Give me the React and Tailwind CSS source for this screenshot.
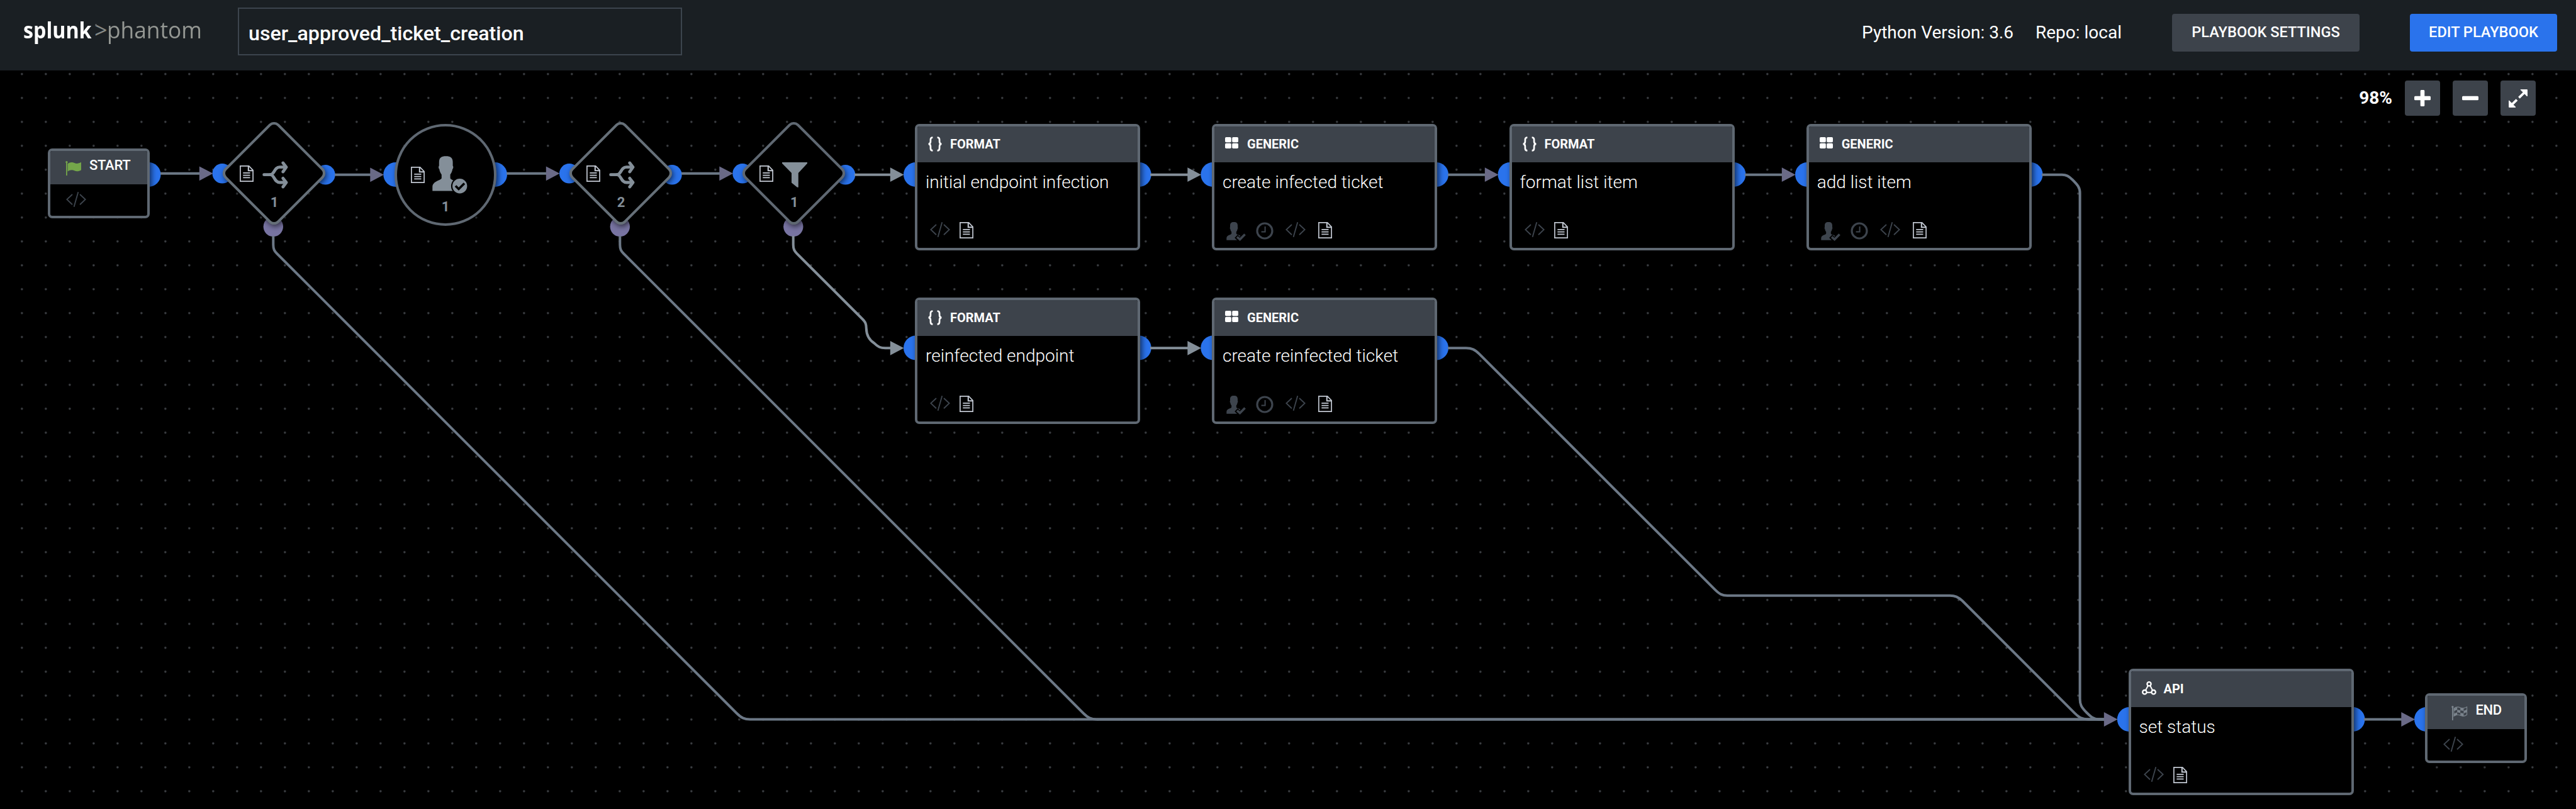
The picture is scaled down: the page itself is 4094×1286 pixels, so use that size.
const LINE = '#6c7886';
const LINE_LIGHT = '#848f99';
const ARROW = '#6a6a87';

/* ---------- icons ---------- */

const CodeIcon = () => (
  <svg width="32" height="24" viewBox="0 0 32 24" fill="none" stroke="#3d444d" strokeWidth="1.9" className="shrink-0">
    <path d="M10 4 L1.3 12 L10 20.3 M22 4 L30.7 12 L22 20.3 M19.3 0.3 L12.6 23.7" />
  </svg>
);

const DocIcon = () => (
  <svg width="22" height="26" viewBox="0 0 22 26" fill="none" stroke="#c3c9d3" strokeWidth="1.7" className="shrink-0">
    <path d="M0.9 0.9 H14.6 L21.1 7.6 V25.1 H0.9 Z" />
    <path d="M13.8 1 V8.2 H21" strokeWidth="2" />
    <path d="M5.3 11.8 H16.5 M5.3 15.6 H16.5 M5.3 19.4 H16.5" />
  </svg>
);

const ClockIcon = () => (
  <svg width="28" height="28" viewBox="0 0 28 28" fill="none" stroke="#3d444d" className="shrink-0">
    <circle cx="14" cy="14" r="12" strokeWidth="3.2" />
    <path d="M14.6 7 V15.6 H8.6" strokeWidth="2" />
  </svg>
);

const SmallUserIcon = () => (
  <svg width="31" height="30" viewBox="0 0 31 30" className="shrink-0">
    <path
      fill="#3d444d"
      d="M12 0 C7.5 0 6 2 6 5.5 V8.3 C5.3 9 5.6 10.6 6.3 11 C6.6 13 7.4 14.6 8.2 15.6 V18.6 C7.6 20.4 0.6 20.6 0.3 25.6 V28.8 H22 V21.5 C19 20 16.3 20 15.8 18.6 V15.6 C16.6 14.6 17.4 13 17.7 11 C18.4 10.6 18.7 9 18 8.3 V5.5 C18 2 16.5 0 12 0 Z"
    />
    <path d="M15.6 22.6 L21.6 28.4 L31 19" fill="none" stroke="#000" strokeWidth="7" />
    <path d="M17 23.6 L21.6 27.6 L29.6 19.4" fill="none" stroke="#3d444d" strokeWidth="3.6" />
  </svg>
);

const UserCheckIcon = () => (
  <svg width="56" height="60" viewBox="0 0 56 60" className="shrink-0">
    <path
      fill="#848f99"
      d="M21.7 0.3 C13.5 0.3 10.8 3.6 10.8 10 V15.5 C9.6 16.8 9.9 19.8 11.2 20.7 C11.8 24.5 13.2 27.4 14.8 29.4 V35.2 C13.6 39 0.8 39.4 0.3 49 V55.4 H43.1 V49 C42.6 39.4 29.8 39 28.6 35.2 V29.4 C30.2 27.4 31.6 24.5 32.2 20.7 C33.5 19.8 33.8 16.8 32.6 15.5 V10 C32.6 3.6 29.9 0.3 21.7 0.3 Z"
    />
    <circle cx="43.7" cy="47.7" r="13.8" fill="#000" />
    <circle cx="43.7" cy="47.7" r="11.7" fill="#848f99" />
    <path d="M37 47.4 L42 52.4 L51 43.4" fill="none" stroke="#000" strokeWidth="3.6" />
  </svg>
);

const ForkIcon = () => (
  <svg width="42" height="44" viewBox="0 0 42 44" fill="none" stroke="#848f99" strokeWidth="4.8" strokeLinecap="round" strokeLinejoin="round" className="shrink-0">
    <path d="M2.6 21.7 H12.5 C19.5 21.7 18.5 9.7 27.5 9.7 H37" />
    <path d="M12.5 21.7 C19.5 21.7 18.5 34 27.5 34 H37" />
    <path d="M32.8 3 L38 9.7 L32.8 17 M32.8 27.4 L38 34 L32.8 41" />
  </svg>
);

const FunnelIcon = () => (
  <svg width="40" height="40" viewBox="0 0 40 40" fill="#848f99" className="shrink-0">
    <path d="M0 0 H40 V1.8 L25.8 17 V39.8 H24 L15 32.4 V17 L0 1.8 Z" />
  </svg>
);

const BracesIcon = () => (
  <svg width="22" height="24" viewBox="0 0 22 24" fill="none" stroke="#fff" strokeWidth="2.7" className="shrink-0">
    <path d="M7.4 1.5 C4.8 1.5 3.9 2.6 3.9 5 V8 C3.9 10.4 3 11.8 0.6 11.9 C3 12 3.9 13.4 3.9 15.8 V18.8 C3.9 21.4 4.8 22.4 7.4 22.4" />
    <path d="M14.6 1.5 C17.2 1.5 18.1 2.6 18.1 5 V8 C18.1 10.4 19 11.8 21.4 11.9 C19 12 18.1 13.4 18.1 15.8 V18.8 C18.1 21.4 17.2 22.4 14.6 22.4" />
  </svg>
);

const GridIcon = () => (
  <svg width="21" height="18" viewBox="0 0 21 18" fill="#fff" className="mb-1 shrink-0">
    <rect x="0" y="0" width="9.8" height="8.3" rx="1.8" />
    <rect x="11.2" y="0" width="9.8" height="8.3" rx="1.8" />
    <rect x="0" y="9.7" width="9.8" height="8.3" rx="1.8" />
    <rect x="11.2" y="9.7" width="9.8" height="8.3" rx="1.8" />
  </svg>
);

const ApiIcon = () => (
  <svg width="23" height="22" viewBox="0 0 23 22" fill="none" stroke="#fff" strokeWidth="2.3" className="mb-0.5 shrink-0">
    <circle cx="11.5" cy="4.3" r="3.1" />
    <circle cx="4.4" cy="17.2" r="3.2" />
    <circle cx="18.6" cy="17.2" r="3.2" />
    <path d="M9.8 7 L6 14.2 M13.2 7 L17 14.2 M7.8 17.8 H15.2" strokeWidth="2" />
  </svg>
);

const GreenFlag = () => (
  <svg width="26" height="23" viewBox="0 0 26 23" fill="#74a64a" className="shrink-0">
    <circle cx="1.9" cy="1.7" r="1.7" />
    <rect x="1" y="2" width="1.8" height="21" />
    <path d="M3.6 4.2 C7.5 1.4 11 1.4 14.2 3 C18 4.9 21 3.8 25 1.8 V14.2 C21.5 16.4 18 17.2 14.2 15.3 C10.8 13.6 7.5 14 3.6 16.4 Z" />
  </svg>
);

const CheckeredFlag = () => (
  <svg width="26" height="23" viewBox="0 0 26 23" className="shrink-0">
    <circle cx="1.9" cy="1.7" r="1.7" fill="#7b848d" />
    <rect x="1" y="2" width="1.8" height="21" fill="#7b848d" />
    <path d="M4 4.2 C7.5 1.4 11 1.4 14.2 3 C18 4.9 21 3.8 24.6 1.8 V14.2 C21.5 16.4 18 17.2 14.2 15.3 C10.8 13.6 7.5 14 4 16.4 Z" fill="none" stroke="#7b848d" strokeWidth="1.1" />
    <path
      fill="#7b848d"
      d="M4 4.2 L9.2 2.2 V6.2 L4 8.3 Z M14.2 3 L19.4 4 V8 L14.2 7.2 Z M9.2 6.2 L14.2 7.2 V11.2 L9.2 10.2 Z M19.4 8 L24.6 6 V10 L19.4 12 Z M4 12.4 L9.2 10.2 V14.2 L4 16.4 Z M14.2 11.2 L19.4 12 V16.4 L14.2 15.3 Z"
    />
  </svg>
);

const ExpandIcon = () => (
  <svg width="30" height="29" viewBox="0 0 30 29" className="shrink-0">
    <path d="M19 0.6 H29.4 V11 Z M0.6 18 V28.4 H11 Z" fill="#fff" stroke="#fff" strokeWidth="1" strokeLinejoin="round" />
    <path d="M25 5 L16.4 13.4 M13 16.6 L5 24.4" stroke="#fff" strokeWidth="3.8" />
  </svg>
);

/* ---------- nodes ---------- */

const HEADS = {
  FORMAT: BracesIcon,
  GENERIC: GridIcon,
  API: ApiIcon,
};

function Card({ x, y, kind, title }) {
  const Head = HEADS[kind];
  return (
    <div
      className="absolute flex h-[201px] w-[358px] flex-col overflow-hidden rounded-[7px] border-4 border-[#5f6872] bg-black shadow-[3px_3px_9px_rgba(0,0,0,0.6)]"
      style={{ left: x, top: y }}
    >
      <div className="flex h-[57px] shrink-0 items-center bg-[#3d434b] pb-px pl-[17px]">
        <span className="flex w-[35px] items-center">
          <Head />
        </span>
        <span className="text-[20px] leading-6 font-bold text-white">{kind}</span>
      </div>
      <div className="pt-3 pl-[13px] text-[28px] leading-10 font-light whitespace-nowrap text-white">{title}</div>
      {kind === 'GENERIC' ? (
        <div className="mt-[43px] flex items-start pl-[19px]">
          <SmallUserIcon />
          <span className="pl-4"><ClockIcon /></span>
          <span className="pl-[19px]"><CodeIcon /></span>
          <span className="pl-5"><DocIcon /></span>
        </div>
      ) : (
        <div className="mt-[43px] flex items-start gap-[15px] pl-5">
          <CodeIcon />
          <DocIcon />
        </div>
      )}
    </div>
  );
}

function Terminal({ x, y, label, pad, icon }) {
  return (
    <div
      className="absolute flex h-[111px] w-[162px] flex-col overflow-hidden rounded-[7px] border-4 border-[#5f6872] bg-black shadow-[3px_3px_9px_rgba(0,0,0,0.6)]"
      style={{ left: x, top: y }}
    >
      <div className="flex h-[53px] shrink-0 items-center gap-3 bg-[#3d434b] pb-1.5" style={{ paddingLeft: pad }}>
        <span className="pt-[7px]">{icon}</span>
        <span className="pb-0.5 text-[22px] leading-6 font-medium tracking-[-0.3px] text-white">{label}</span>
      </div>
      <div className="pt-3 pl-[25px]">
        <CodeIcon />
      </div>
    </div>
  );
}

function Diamond({ x, border, count, children }) {
  return (
    <div className="absolute top-[194px] h-[163px] w-[163px]" style={{ left: x - 81.5 }}>
      <svg className="absolute inset-0 overflow-visible drop-shadow-[2px_3px_4px_rgba(0,0,0,0.6)]" width="163" height="163">
        <rect x="22.5" y="22.5" width="118" height="118" rx="9.5" transform="rotate(45 81.5 81.5)" fill="#000" stroke={border} strokeWidth="4" />
      </svg>
      <div className="relative flex h-full flex-col pt-[62px]">
        <div className="flex h-11 items-start pl-[27px]">
          <span className="pt-[7px]"><DocIcon /></span>
          <span className="pl-[14px]">{children}</span>
        </div>
        <span className="pt-1 pl-0.5 text-center text-[22px] leading-9 font-bold text-[#848f99]">{count}</span>
      </div>
    </div>
  );
}

function Prompt() {
  return (
    <div className="absolute top-[197px] left-[627px] h-[162px] w-[162px] rounded-full border-4 border-[#5f6872] bg-black shadow-[3px_2px_9px_rgba(0,0,0,0.6)]">
      <div className="flex h-[107px] items-start pt-[47px] pl-[22px]">
        <span className="pt-[17px]"><DocIcon /></span>
        <span className="pl-3"><UserCheckIcon /></span>
      </div>
      <div className="pt-[7px] text-center text-[22px] leading-7 font-bold text-[#848f99]">1</div>
    </div>
  );
}

/* ---------- edges ---------- */

const BIG = [
  [236, 277.5], [628.8, 277.5], [786.5, 277.5],
  [1455.5, 277.5], [1810.2, 277.5], [1927.8, 277.5], [2282.5, 277.5],
  [2400, 277.5], [2755, 277.5], [2872.5, 277.5], [3227, 277.5],
  [1455.5, 553], [1810.2, 553], [1927.8, 553], [2282.5, 553],
  [3384.3, 1143.5], [3739, 1143.5], [3856.5, 1143.5],
];

const SMALL = [
  [353.2, 275.8], [517, 277.8], [904.7, 275.8], [1068, 277.8], [1180, 275.8], [1343.6, 277.8],
];

const EDGES = [
  { d: 'M255 275.8 H320', c: LINE, a: [338.5, 275.8] },
  { d: 'M532 277.8 H592', c: LINE, a: [610, 277.8] },
  { d: 'M805 275.8 H872', c: LINE, a: [889.5, 275.8] },
  { d: 'M1083 275.8 H1147', c: LINE, a: [1165, 275.8] },
  { d: 'M1358 277.7 H1420', c: LINE_LIGHT, a: [1436.5, 277.7], ac: LINE_LIGHT },
  { d: 'M1828 277.7 H1892', c: LINE_LIGHT, a: [1909, 277.7], ac: LINE_LIGHT },
  { d: 'M2301 277.7 H2365', c: LINE, a: [2381.5, 277.7] },
  { d: 'M2773 277.7 H2837', c: LINE, a: [2853.5, 277.7] },
  { d: 'M1260.7 375 V389 C1260.7 396 1262.5 399 1266.5 403.1 L1370.5 507 C1376 512.5 1376.5 515 1376.8 522 C1377 534 1382 541 1390 546 C1396 551.5 1399 553.3 1407 553.3 H1420', c: LINE_LIGHT, a: [1436.5, 553.3], ac: LINE_LIGHT },
  { d: 'M1828 553.3 H1892', c: LINE_LIGHT, a: [1909, 553.3], ac: LINE_LIGHT },
  { d: 'M434.3 375 V389 C434.3 396 436 399 440 403 L1171 1134 C1178 1141 1183 1143.4 1192 1143.4 H3346', c: LINE },
  { d: 'M985.3 375 V389 C985.3 396 987 399 991 403 L1722 1134 C1729 1141 1734 1143.4 1743 1143.4 H3346', c: LINE },
  { d: 'M2301 553.3 H2330 C2339 553.3 2344 555.7 2351 562.7 L2725.7 937.4 C2732.5 944.2 2737 946.7 2745 946.7 H3099 C3107 946.7 3112 949 3119 955.3 L3297 1133.4 C3304 1140.4 3309 1143.4 3318 1143.4 H3346', c: LINE },
  { d: 'M3245 277.7 H3277 C3284 277.7 3288 280 3294 286 C3302 294 3305.6 298 3305.6 307 V1111 C3305.6 1120 3308 1124 3315 1131.5 C3323 1139.5 3327 1143.4 3336 1143.4 H3346', c: LINE, a: [3365.5, 1143.5] },
  { d: 'M3757 1143.5 H3820', c: LINE, a: [3838, 1143.5] },
];

function Wiring() {
  return (
    <svg className="absolute inset-0" width="4094" height="1174" viewBox="0 112 4094 1174" fill="none">
      {BIG.map(([x, y]) => (
        <circle key={`${x}-${y}`} cx={x} cy={y} r="19.5" fill="#2a73ec" />
      ))}
      {SMALL.map(([x, y]) => (
        <circle key={x} cx={x} cy={y} r="15.7" fill="#2a73ec" />
      ))}
      {[434.3, 985.3, 1260.8].map((x) => (
        <circle key={x} cx={x} cy="360.3" r="15.7" fill="#7874a2" />
      ))}
      {EDGES.map((e) => (
        <path key={e.d} d={e.d} stroke={e.c} strokeWidth="4" />
      ))}
      {EDGES.filter((e) => e.a).map((e) => (
        <path key={e.d} d={`M${e.a[0]} ${e.a[1]} l-21.7 -11.4 v22.8 z`} fill={e.ac || ARROW} />
      ))}
    </svg>
  );
}

/* ---------- page ---------- */

function Header() {
  return (
    <header className="flex h-28 items-center bg-[#1a1f23] pr-[30px]">
      <div className="flex w-[378px] shrink-0 items-baseline pb-4 pl-[37px] font-['Open_Sans'] text-[36px] leading-[48px]">
        <span className="w-[113px] origin-left scale-x-[0.895] font-bold text-white">splunk</span>
        <span className="relative w-[20px] text-[#868a87]">
          &gt;
          <i className="absolute top-[14px] left-px h-[3px] w-[3px] rounded-full bg-[#5b5f60]" />
        </span>
        <span className="origin-left scale-x-[0.98] text-[#949793]">phantom</span>
      </div>
      <div className="mb-3 flex h-[76px] w-[706px] items-center border-2 border-[#3c444d] pt-1.5 pl-[15px] text-[32.2px] leading-10 font-medium text-white">
        user_approved_ticket_creation
      </div>
      <div className="mb-2 ml-auto flex items-center text-[28px] whitespace-nowrap text-white">
        <span>Python Version: 3.6</span>
        <span className="pl-[35px]">Repo: local</span>
        <button className="ml-20 h-[60px] w-[298px] rounded-[4px] bg-[#3d434b] text-[23.6px] font-medium">PLAYBOOK SETTINGS</button>
        <button className="ml-20 h-[60px] w-[234px] rounded-[4px] bg-[#2a73ec] text-[23.6px] font-medium">EDIT PLAYBOOK</button>
      </div>
    </header>
  );
}

function ZoomControls() {
  const btn = 'flex h-14 w-14 items-center justify-center rounded-[4px] bg-[#3d434b]';
  return (
    <div className="absolute top-4 right-16 flex items-center gap-5 bg-black text-[28px] font-bold text-white">
      <span>98%</span>
      <button className={btn}>
        <svg width="26" height="26" viewBox="0 0 26 26" fill="#fff">
          <rect x="0" y="9.7" width="26" height="6.6" rx="1.5" />
          <rect x="9.7" y="0" width="6.6" height="26" rx="1.5" />
        </svg>
      </button>
      <button className={btn}>
        <svg width="26" height="26" viewBox="0 0 26 26" fill="#fff">
          <rect x="0" y="9.7" width="26" height="6.6" rx="1.5" />
        </svg>
      </button>
      <button className={btn}>
        <ExpandIcon />
      </button>
    </div>
  );
}

export default function App() {
  return (
    <div className="flex h-[1286px] w-[4094px] flex-col overflow-hidden bg-black font-[Roboto,sans-serif]">
      <Header />
      <main className="relative flex-1 overflow-hidden bg-[radial-gradient(circle_at_34.8px_5.7px,#3a3d41_1px,transparent_2.4px)] bg-[length:38px_38px]">
        <Wiring />
        <div className="absolute inset-x-0 -top-28 h-[1286px]">
          <Terminal x={76} y={236} label="START" pad={24} icon={<GreenFlag />} />
          <Diamond x={435} border="#667079" count="1"><ForkIcon /></Diamond>
          <Prompt />
          <Diamond x={986} border="#667079" count="2"><ForkIcon /></Diamond>
          <Diamond x={1261.3} border="#5f6872" count="1">
            <span className="block pt-0.5"><FunnelIcon /></span>
          </Diamond>
          <Card x={1454} y={197} kind="FORMAT" title="initial endpoint infection" />
          <Card x={1926} y={197} kind="GENERIC" title="create infected ticket" />
          <Card x={2398.5} y={197} kind="FORMAT" title="format list item" />
          <Card x={2870.7} y={197} kind="GENERIC" title="add list item" />
          <Card x={1454} y={472.5} kind="FORMAT" title="reinfected endpoint" />
          <Card x={1926} y={472.5} kind="GENERIC" title="create reinfected ticket" />
          <Card x={3382.5} y={1063} kind="API" title="set status" />
          <Terminal x={3854.4} y={1102} label="END" pad={38} icon={<CheckeredFlag />} />
        </div>
        <ZoomControls />
      </main>
    </div>
  );
}
